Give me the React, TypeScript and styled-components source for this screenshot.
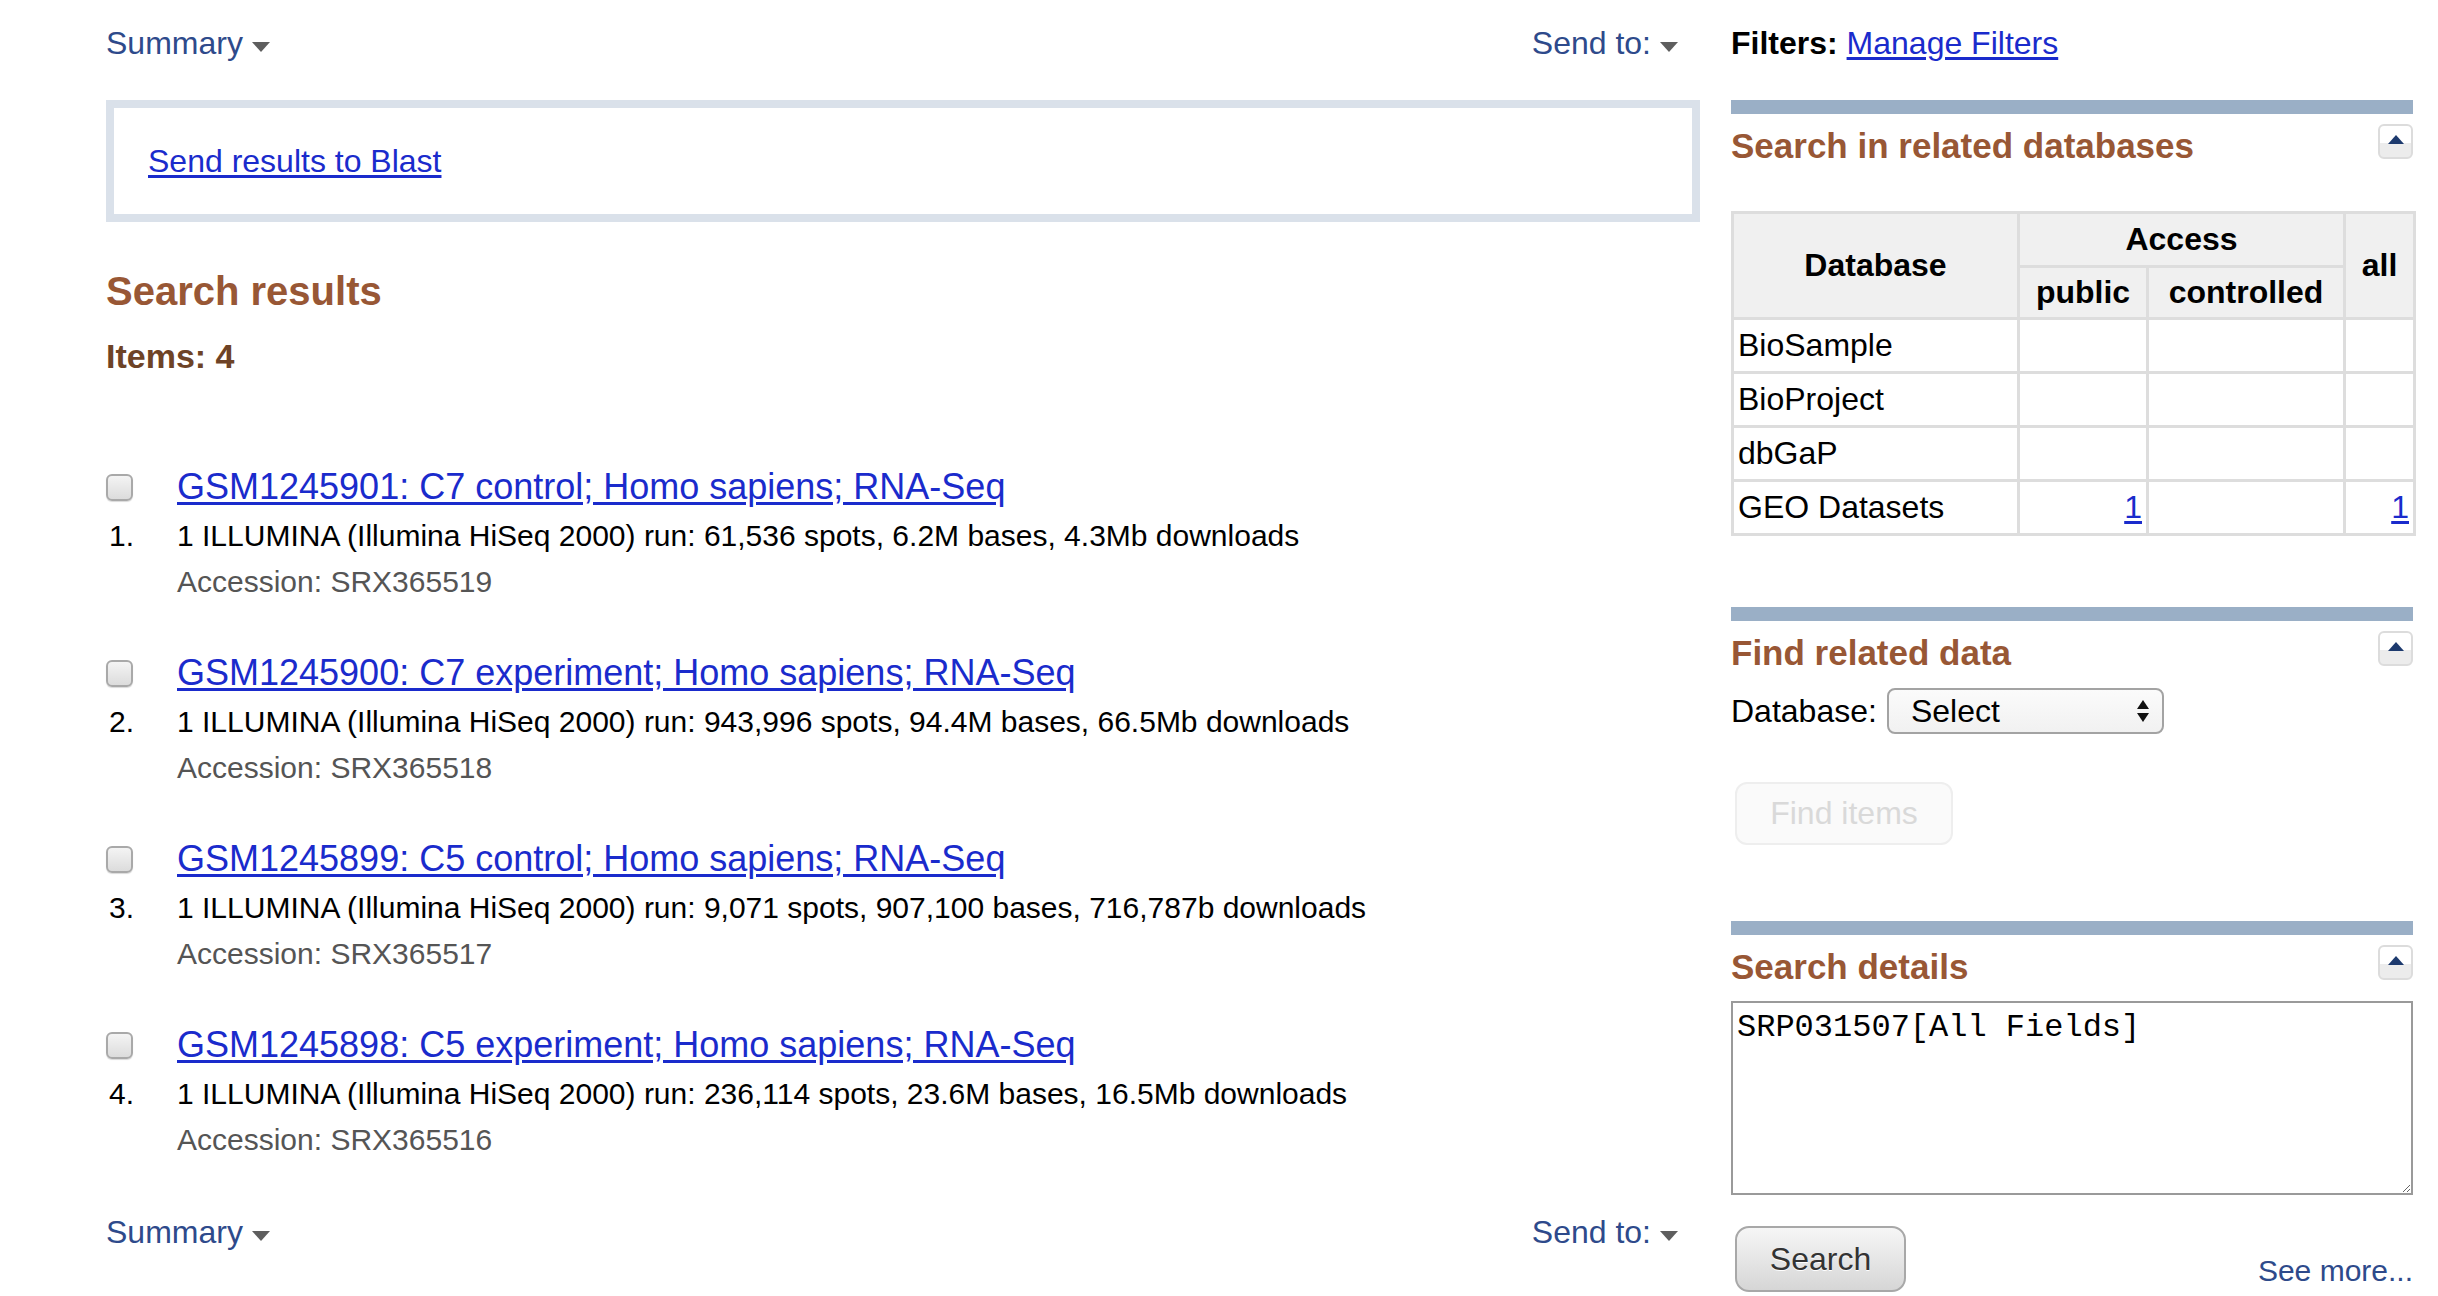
import styled, { createGlobalStyle } from "styled-components";

const GlobalStyle = createGlobalStyle`
  body {
    margin: 0;
    background: #fff;
    font-family: "Liberation Sans", Arial, sans-serif;
    color: #000;
  }
`;

const results = [
  {
    id: "GSM1245901",
    title: "GSM1245901: C7 control; Homo sapiens; RNA-Seq",
    desc: "1 ILLUMINA (Illumina HiSeq 2000) run: 61,536 spots, 6.2M bases, 4.3Mb downloads",
    acc: "SRX365519",
  },
  {
    id: "GSM1245900",
    title: "GSM1245900: C7 experiment; Homo sapiens; RNA-Seq",
    desc: "1 ILLUMINA (Illumina HiSeq 2000) run: 943,996 spots, 94.4M bases, 66.5Mb downloads",
    acc: "SRX365518",
  },
  {
    id: "GSM1245899",
    title: "GSM1245899: C5 control; Homo sapiens; RNA-Seq",
    desc: "1 ILLUMINA (Illumina HiSeq 2000) run: 9,071 spots, 907,100 bases, 716,787b downloads",
    acc: "SRX365517",
  },
  {
    id: "GSM1245898",
    title: "GSM1245898: C5 experiment; Homo sapiens; RNA-Seq",
    desc: "1 ILLUMINA (Illumina HiSeq 2000) run: 236,114 spots, 23.6M bases, 16.5Mb downloads",
    acc: "SRX365516",
  },
];

const databases = [
  { name: "BioSample", pub: "", all: "" },
  { name: "BioProject", pub: "", all: "" },
  { name: "dbGaP", pub: "", all: "" },
  { name: "GEO Datasets", pub: "1", all: "1" },
];

const App = () => (
  <>
    <GlobalStyle />
    <Page>
      <Main>
        <ToolBar>
          <Menu>
            Summary <Caret />
          </Menu>
          <Menu>
            Send to: <Caret />
          </Menu>
        </ToolBar>

        <BlastBox>
          <Link href="#">Send results to Blast</Link>
        </BlastBox>

        <ResultsTitle>Search results</ResultsTitle>
        <ItemsCount>Items: 4</ItemsCount>

        <ResultList>
          {results.map((r, i) => (
            <Result key={r.id}>
              <Check type="checkbox" />
              <TitleLink href="#">{r.title}</TitleLink>
              <Num>{i + 1}.</Num>
              <Desc>{r.desc}</Desc>
              <span />
              <Accession>Accession: {r.acc}</Accession>
            </Result>
          ))}
        </ResultList>

        <ToolBar $bottom>
          <Menu>
            Summary <Caret />
          </Menu>
          <Menu>
            Send to: <Caret />
          </Menu>
        </ToolBar>
      </Main>

      <Side>
        <FilterRow>
          <b>Filters:</b>&nbsp;<Link href="#">Manage Filters</Link>
        </FilterRow>

        <Portlet>
          <PortletBar />
          <PortletHead>
            <PortletTitle>Search in related databases</PortletTitle>
            <Toggle />
          </PortletHead>
          <DbTable>
            <colgroup>
              <col style={{ width: 286 }} />
              <col style={{ width: 129 }} />
              <col style={{ width: 197 }} />
              <col style={{ width: 70 }} />
            </colgroup>
            <thead>
              <tr>
                <Th rowSpan={2}>Database</Th>
                <Th colSpan={2} $h={51}>
                  Access
                </Th>
                <Th rowSpan={2}>all</Th>
              </tr>
              <tr>
                <Th $h={49}>public</Th>
                <Th $h={49}>controlled</Th>
              </tr>
            </thead>
            <tbody>
              {databases.map((d) => (
                <tr key={d.name}>
                  <Td>{d.name}</Td>
                  <Td $num>{d.pub && <Link href="#">{d.pub}</Link>}</Td>
                  <Td $num />
                  <Td $num>{d.all && <Link href="#">{d.all}</Link>}</Td>
                </tr>
              ))}
            </tbody>
          </DbTable>
        </Portlet>

        <Portlet $gap={71}>
          <PortletBar />
          <PortletHead>
            <PortletTitle>Find related data</PortletTitle>
            <Toggle />
          </PortletHead>
          <DbRow>
            Database:
            <FakeSelect>
              Select
              <svg width="14" height="24" viewBox="0 0 14 24">
                <path d="M7 1 L13 10 L1 10 Z" fill="#111" />
                <path d="M7 23 L13 14 L1 14 Z" fill="#111" />
              </svg>
            </FakeSelect>
          </DbRow>
          <FindButton disabled>Find items</FindButton>
        </Portlet>

        <Portlet $gap={76}>
          <PortletBar />
          <PortletHead>
            <PortletTitle>Search details</PortletTitle>
            <Toggle />
          </PortletHead>
          <Details defaultValue="SRP031507[All Fields]" spellCheck={false} />
          <DetailsFoot>
            <SearchButton>Search</SearchButton>
            <SeeMore href="#">See more...</SeeMore>
          </DetailsFoot>
        </Portlet>
      </Side>
    </Page>
  </>
);

export default App;

const Page = styled.div`
  display: flex;
  gap: 31px;
  padding-left: 106px;
`;

const Main = styled.div`
  width: 1594px;
  flex: none;
`;

const Side = styled.div`
  width: 682px;
  flex: none;
`;

const ToolBar = styled.div<{ $bottom?: boolean }>`
  height: 86px;
  display: flex;
  align-items: center;
  justify-content: space-between;
  padding-right: 22px;
  margin-top: ${(p) => (p.$bottom ? "27px" : "0")};
`;

const Menu = styled.span`
  font-size: 32px;
  color: #2e4a8b;
  display: inline-flex;
  align-items: center;
`;

const Caret = styled.i`
  display: inline-block;
  width: 0;
  height: 0;
  margin: 8px 0 0 9px;
  border-left: 9px solid transparent;
  border-right: 9px solid transparent;
  border-top: 10px solid #5e5e5e;
`;

const Link = styled.a`
  color: #1a2bcc;
  text-decoration: underline;
  text-underline-offset: 3px;
`;

const BlastBox = styled.div`
  margin-top: 14px;
  height: 106px;
  border: 8px solid #dae1ea;
  display: flex;
  align-items: center;
  padding-left: 34px;
  font-size: 32px;
`;

const ResultsTitle = styled.h2`
  margin: 45px 0 0;
  font-size: 40px;
  line-height: 48px;
  font-weight: bold;
  color: #985735;
`;

const ItemsCount = styled.h3`
  margin: 21px 0 0;
  font-size: 34px;
  line-height: 40px;
  font-weight: bold;
  color: #6e4326;
`;

const ResultList = styled.div`
  margin-top: 89px;
  display: flex;
  flex-direction: column;
  gap: 47px;
`;

const Result = styled.div`
  display: grid;
  grid-template-columns: 71px 1fr;
  align-items: center;
`;

const Check = styled.input`
  appearance: none;
  margin: 0;
  width: 27px;
  height: 27px;
  border: 2px solid #a9a9a9;
  border-radius: 6px;
  background: linear-gradient(#f4f4f4, #dcdcdc);
  box-shadow: 0 1px 1px rgba(0, 0, 0, 0.15);
`;

const TitleLink = styled(Link)`
  font-size: 36px;
  line-height: 44px;
`;

const Num = styled.span`
  font-size: 30px;
  line-height: 48px;
  padding-left: 3px;
  margin-top: 3px;
`;

const Desc = styled.span`
  font-size: 30px;
  line-height: 48px;
  margin-top: 3px;
`;

const Accession = styled.span`
  font-size: 30px;
  line-height: 44px;
  color: #555;
`;

const FilterRow = styled.div`
  height: 86px;
  display: flex;
  align-items: center;
  font-size: 32px;
`;

const Portlet = styled.section<{ $gap?: number }>`
  margin-top: ${(p) => p.$gap ?? 14}px;
`;

const PortletBar = styled.div`
  height: 14px;
  background: #9aafc6;
`;

const PortletHead = styled.div`
  display: flex;
  justify-content: space-between;
  align-items: flex-start;
`;

const PortletTitle = styled.h3`
  margin: 12px 0 0;
  font-size: 35px;
  line-height: 40px;
  font-weight: bold;
  color: #985735;
`;

const Toggle = styled.button`
  margin-top: 10px;
  width: 35px;
  height: 35px;
  padding: 0;
  border: 2px solid #dcdcdc;
  border-radius: 6px;
  background: linear-gradient(#fff 0%, #fff 55%, #ececec 56%, #ececec 100%);
  display: flex;
  justify-content: center;
  padding-top: 9px;

  &::before {
    content: "";
    width: 0;
    height: 0;
    border-left: 8px solid transparent;
    border-right: 8px solid transparent;
    border-bottom: 9px solid #1d3a6e;
  }
`;

const DbTable = styled.table`
  margin-top: 45px;
  width: 682px;
  table-layout: fixed;
  border-collapse: collapse;
  font-size: 32px;
`;

const Th = styled.th<{ $h?: number }>`
  background: #f0f0f0;
  border: 3px solid #dddddd;
  font-weight: bold;
  padding: 0 4px;
  height: ${(p) => (p.$h ? `${p.$h}px` : "auto")};
  text-align: center;
  vertical-align: middle;
`;

const Td = styled.td<{ $num?: boolean }>`
  border: 3px solid #dddddd;
  height: 51px;
  padding: 0 4px;
  text-align: ${(p) => (p.$num ? "right" : "left")};
  vertical-align: middle;
`;

const DbRow = styled.div`
  margin-top: 15px;
  display: flex;
  align-items: center;
  gap: 10px;
  font-size: 32px;
`;

const FakeSelect = styled.div`
  width: 277px;
  height: 46px;
  box-sizing: border-box;
  border: 2px solid #a3a3a3;
  border-radius: 8px;
  background: linear-gradient(#fbfbfb, #f1f1f1);
  display: flex;
  align-items: center;
  justify-content: space-between;
  padding: 0 12px 0 22px;
  font-size: 32px;
`;

const FindButton = styled.button`
  margin: 48px 0 0 4px;
  width: 218px;
  height: 63px;
  border: 2px solid #eeeeee;
  border-radius: 12px;
  background: #fafafa;
  color: #d9d9d9;
  font-family: inherit;
  font-size: 32px;
  padding: 0;
`;

const Details = styled.textarea`
  display: block;
  margin-top: 14px;
  width: 682px;
  height: 194px;
  box-sizing: border-box;
  border: 2px solid #9a9a9a;
  padding: 6px 4px;
  font-family: "Liberation Mono", "Courier New", monospace;
  font-size: 32px;
  line-height: 38px;
  color: #000;
  resize: both;
  outline: none;
`;

const DetailsFoot = styled.div`
  margin-top: 31px;
  display: flex;
  justify-content: space-between;
  align-items: flex-end;
  padding-left: 4px;
`;

const SearchButton = styled.button`
  width: 171px;
  height: 66px;
  border: 2px solid #a8a8a8;
  border-radius: 14px;
  background: linear-gradient(#f6f6f6, #d6d6d6);
  color: #333;
  font-family: inherit;
  font-size: 32px;
  text-shadow: 0 1px 0 #fff;
  padding: 0;
`;

const SeeMore = styled.a`
  font-size: 30px;
  color: #2e4a8b;
  text-decoration: none;
  line-height: 40px;
  margin-bottom: 1px;
`;
